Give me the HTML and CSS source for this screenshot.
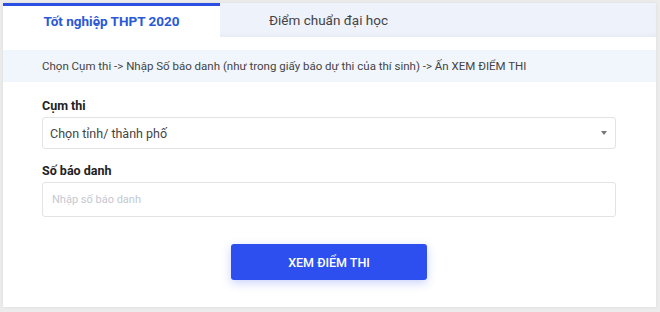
FILE: index.html
```html
<!DOCTYPE html>
<html lang="vi">
<head>
  <meta charset="UTF-8">
  <meta name="viewport" content="width=device-width, initial-scale=1">
  <title>Tra cứu điểm thi</title>
  <link rel="stylesheet" href="styles.css">
</head>
<body>
  <div class="card">
    <div class="tabs">
      <div class="tab active">Tốt nghiệp THPT 2020</div>
      <div class="tab">Điểm chuẩn đại học</div>
    </div>

    <div class="hint">Chọn Cụm thi -&gt; Nhập Số báo danh (như trong giấy báo dự thi của thí sinh) -&gt; Ấn XEM ĐIỂM THI</div>

    <form class="form" onsubmit="return false">
      <label class="label">Cụm thi</label>
      <div class="select">
        <span>Chọn tỉnh/ thành phố</span>
        <span class="caret"></span>
      </div>

      <label class="label">Số báo danh</label>
      <input class="input" type="text" placeholder="Nhập số báo danh">

      <div class="actions">
        <button class="btn" type="submit">XEM ĐIỂM THI</button>
      </div>
    </form>
  </div>
</body>
</html>
```

FILE: styles.css
```css
body {
  margin: 0;
  padding: 3px 4px 5px 3px;
  background: #ececec;
  font-family: Roboto, 'Noto Sans', sans-serif;
  color: #333;
}
.card {
  background: #fff;
  height: 304px;
  box-shadow: 0 0 3px rgba(0,0,0,0.08);
}
.tabs {
  display: flex;
  height: 34px;
  background: #eef2fa;
  box-shadow: inset 0 -4px 6px -4px rgba(40,60,120,0.08);
}
.tab {
  display: flex;
  align-items: center;
  justify-content: center;
  flex: 0 0 217px;
  font-size: 13.5px;
  color: #444;
}
.tab.active {
  background: #fff;
  color: #2a58d6;
  font-weight: bold;
  border-top: 3px solid #2b4fe0;
  box-sizing: border-box;
  padding-bottom: 2px;
}
.hint {
  margin-top: 13px;
  height: 32px;
  line-height: 32px;
  background: #f0f6fc;
  font-size: 11.5px;
  padding-left: 39px;
  color: #444;
}
.form {
  padding: 16px 40px 0 39px;
}
.label {
  display: block;
  font-size: 12.5px;
  font-weight: bold;
  color: #222;
  margin-bottom: 4px;
}
.select {
  height: 30px;
  border: 1px solid #e3e3e3;
  border-radius: 3px;
  display: flex;
  align-items: center;
  justify-content: space-between;
  padding: 0 8px 0 7px;
  font-size: 12.5px;
  color: #444;
  margin-bottom: 14px;
}
.caret {
  width: 0;
  height: 0;
  border-left: 3px solid transparent;
  border-right: 3px solid transparent;
  border-top: 4px solid #777;
}
.input {
  display: block;
  width: 100%;
  box-sizing: border-box;
  height: 35px;
  border: 1px solid #e3e3e3;
  border-radius: 3px;
  padding: 0 9px;
  font-family: Roboto, 'Noto Sans', sans-serif;
  font-size: 11px;
  outline: none;
}
.input::placeholder {
  color: #c4c8d0;
}
.actions {
  display: flex;
  justify-content: center;
  margin-top: 27px;
}
.btn {
  width: 196px;
  height: 36px;
  background: #2d4ff0;
  color: #fff;
  border: none;
  border-radius: 3px;
  font-family: Roboto, 'Noto Sans', sans-serif;
  font-size: 12.5px;
  font-weight: 500;
  box-shadow: 0 3px 10px rgba(45,79,240,0.25);
  cursor: pointer;
}
```
